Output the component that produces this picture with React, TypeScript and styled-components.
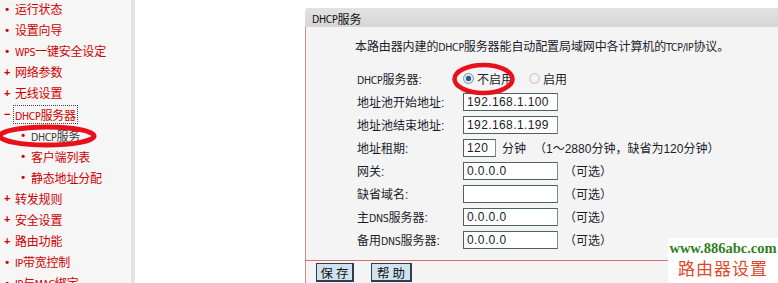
import React from "react";
import styled, { createGlobalStyle } from "styled-components";

const GlobalStyle = createGlobalStyle`
  html, body {
    margin: 0;
    padding: 0;
    background: #fff;
    overflow: hidden;
  }
  body {
    font-family: "Liberation Sans", "Noto Sans CJK SC", sans-serif;
    font-size: 12px;
  }
`;

const Page = styled.div`
  position: relative;
  display: flex;
  width: 778px;
  height: 283px;
  overflow: hidden;
`;

const Sidebar = styled.ul`
  width: 131px;
  flex: none;
  margin: 0;
  padding: 0;
  list-style: none;
  background: #f6f6f6;
  border-right: 4px solid #e2e2e2;
`;

const MenuItem = styled.li<{ $sub?: boolean }>`
  position: relative;
  display: flex;
  align-items: center;
  height: 21.1px;
  padding-left: ${(p) => (p.$sub ? 18 : 2)}px;
  color: #d00000;
  font-size: 12px;
  letter-spacing: -0.2px;
  white-space: nowrap;
  &:first-child {
    margin-top: -2px;
  }
`;

const Marker = styled.span`
  display: inline-block;
  width: 10px;
  text-align: center;
  margin-right: 2px;
  font-weight: bold;
  font-size: 11px;
`;

const Label = styled.span<{ $active?: boolean; $focus?: boolean }>`
  color: ${(p) => (p.$active ? "#3a3a3a" : "#d00000")};
  outline: ${(p) => (p.$focus ? "1px dotted #444" : "none")};
  padding: 0 1px;
`;

const Narrow = styled.span`
  font-family: "DejaVu Sans Condensed", "Liberation Sans", sans-serif;
  font-size: 10.5px;
  letter-spacing: -0.3px;
`;

const Main = styled.section`
  flex: 1;
  margin-left: 170px;
  margin-top: 8px;
  display: flex;
  flex-direction: column;
  min-width: 0;
`;

const PanelHeader = styled.div`
  height: 22px;
  display: flex;
  align-items: center;
  padding: 2px 0 0 7px;
  box-sizing: border-box;
  background: linear-gradient(#e2e2e2, #d6d6d6);
  border-top-left-radius: 3px;
  color: #111;
  font-size: 12px;
`;

const PanelBody = styled.div`
  background: #f4f4f4;
  border-left: 1px solid #d58a8a;
  padding: 12px 0 9px 49px;
  color: #1c1c2c;
  font-size: 12px;
`;

const Intro = styled.p`
  margin: 0 0 12px 0;
  line-height: 16px;
  letter-spacing: -0.1px;
  white-space: nowrap;
`;

const FormRow = styled.div`
  display: flex;
  align-items: center;
  height: 23px;
  white-space: nowrap;
`;

const FieldLabel = styled.div`
  width: 106px;
  padding-left: 2px;
  flex: none;
`;

const TextInput = styled.div<{ $w?: number }>`
  box-sizing: border-box;
  width: ${(p) => p.$w ?? 95}px;
  height: 18px;
  line-height: 16px;
  border: 1px solid #4f6262;
  border-right-color: #7a8c8c;
  background: #fff;
  padding-left: 3px;
  font-size: 12px;
  letter-spacing: 0.4px;
  color: #222;
  overflow: hidden;
`;

const Note = styled.span<{ $gap?: number }>`
  margin-left: ${(p) => p.$gap ?? 10}px;
`;

const RadioGroup = styled.label`
  display: inline-flex;
  align-items: center;
  margin-right: 16px;
`;

const Radio = styled.span<{ $on?: boolean }>`
  box-sizing: border-box;
  width: 11px;
  height: 11px;
  border-radius: 50%;
  margin-right: 3px;
  border: 1px solid ${(p) => (p.$on ? "#7c93a8" : "#c4c4c4")};
  background: ${(p) =>
    p.$on
      ? "radial-gradient(circle, #1f5f8f 0 2.5px, #dfe8ef 3px)"
      : "radial-gradient(circle, #fafafa, #e4e4e4)"};
`;

const Footer = styled.div`
  border-left: 1px solid #d58a8a;
  border-top: 1px solid #d87070;
  background: #f4f4f4;
  padding: 2px 0 0 10px;
  display: flex;
  gap: 17px;
  height: 30px;
`;

const Button = styled.button<{ $w: number }>`
  width: ${(p) => p.$w}px;
  height: 19px;
  padding: 0;
  border: 1px solid #2e3e4e;
  border-right-width: 2px;
  border-bottom-width: 2px;
  background: #cfe2ee;
  color: #111;
  font-family: "Noto Sans CJK SC", sans-serif;
  font-size: 12.5px;
  letter-spacing: 3px;
  text-indent: 3px;
  white-space: nowrap;
  line-height: 15px;
`;

const Watermark = styled.div`
  position: absolute;
  left: 668px;
  top: 238px;
  width: 110px;
  height: 45px;
  background: #fff;
  text-align: center;
`;

const WatermarkUrl = styled.div`
  margin-top: 2px;
  font-family: "Liberation Serif", serif;
  font-weight: bold;
  font-size: 14.5px;
  color: #2f7f1f;
  line-height: 17px;
`;

const WatermarkTitle = styled.div`
  font-family: "Noto Sans CJK SC", serif;
  font-size: 17px;
  letter-spacing: 1px;
  color: #e4472a;
  line-height: 22px;
`;

const Annotation = styled.svg`
  position: absolute;
  left: 0;
  top: 0;
  pointer-events: none;
`;

type Item = { marker: string; text: React.ReactNode; key: string; sub?: boolean; active?: boolean; focus?: boolean };

const menu: Item[] = [
  { key: "a", marker: "•", text: "运行状态" },
  { key: "b", marker: "•", text: "设置向导" },
  { key: "c", marker: "•", text: <><Narrow>WPS</Narrow>一键安全设定</> },
  { key: "d", marker: "+", text: "网络参数" },
  { key: "e", marker: "+", text: "无线设置" },
  { key: "f", marker: "−", text: <><Narrow>DHCP</Narrow>服务器</>, focus: true },
  { key: "g", marker: "•", text: <><Narrow>DHCP</Narrow>服务</>, sub: true, active: true },
  { key: "h", marker: "•", text: "客户端列表", sub: true },
  { key: "i", marker: "•", text: "静态地址分配", sub: true },
  { key: "j", marker: "+", text: "转发规则" },
  { key: "k", marker: "+", text: "安全设置" },
  { key: "l", marker: "+", text: "路由功能" },
  { key: "m", marker: "•", text: <><Narrow>IP</Narrow>带宽控制</> },
  { key: "n", marker: "•", text: <><Narrow>IP</Narrow>与<Narrow>MAC</Narrow>绑定</> },
];

const optional = [
  { label: "网关:", value: "0.0.0.0" },
  { label: "缺省域名:", value: "" },
  { label: <>主<Narrow>DNS</Narrow>服务器:</>, value: "0.0.0.0" },
  { label: <>备用<Narrow>DNS</Narrow>服务器:</>, value: "0.0.0.0" },
];

export default function App() {
  return (
    <Page>
      <GlobalStyle />
      <Sidebar>
        {menu.map((m) => (
          <MenuItem key={m.key} $sub={m.sub}>
            <Marker>{m.marker}</Marker>
            <Label $active={m.active} $focus={m.focus}>
              {m.text}
            </Label>
          </MenuItem>
        ))}
      </Sidebar>

      <Main>
        <PanelHeader>
          <Narrow>DHCP</Narrow>服务
        </PanelHeader>
        <PanelBody>
          <Intro>
            本路由器内建的<Narrow>DHCP</Narrow>服务器能自动配置局域网中各计算机的<Narrow>TCP/IP</Narrow>协议。
          </Intro>
          <FormRow>
            <FieldLabel>
              <Narrow>DHCP</Narrow>服务器:
            </FieldLabel>
            <RadioGroup>
              <Radio $on />
              不启用
            </RadioGroup>
            <RadioGroup>
              <Radio />
              启用
            </RadioGroup>
          </FormRow>
          <FormRow>
            <FieldLabel>地址池开始地址:</FieldLabel>
            <TextInput>192.168.1.100</TextInput>
          </FormRow>
          <FormRow>
            <FieldLabel>地址池结束地址:</FieldLabel>
            <TextInput>192.168.1.199</TextInput>
          </FormRow>
          <FormRow>
            <FieldLabel>地址租期:</FieldLabel>
            <TextInput $w={33}>120</TextInput>
            <Note $gap={6}>分钟</Note>
            <Note $gap={8}>（1～2880分钟，缺省为120分钟）</Note>
          </FormRow>
          {optional.map((o, i) => (
            <FormRow key={i}>
              <FieldLabel>{o.label}</FieldLabel>
              <TextInput>{o.value}</TextInput>
              <Note $gap={6}>（可选）</Note>
            </FormRow>
          ))}
        </PanelBody>
        <Footer>
          <Button $w={38}>保存</Button>
          <Button $w={41}>帮助</Button>
        </Footer>
      </Main>

      <Watermark>
        <WatermarkUrl>www.886abc.com</WatermarkUrl>
        <WatermarkTitle>路由器设置</WatermarkTitle>
      </Watermark>

      <Annotation width="778" height="283" viewBox="0 0 778 283">
        <ellipse cx="483.5" cy="79" rx="29" ry="14" fill="none" stroke="#e8101a" strokeWidth="4.5" />
        <ellipse cx="47" cy="136" rx="47" ry="9" fill="none" stroke="#e8101a" strokeWidth="5" />
      </Annotation>
    </Page>
  );
}
